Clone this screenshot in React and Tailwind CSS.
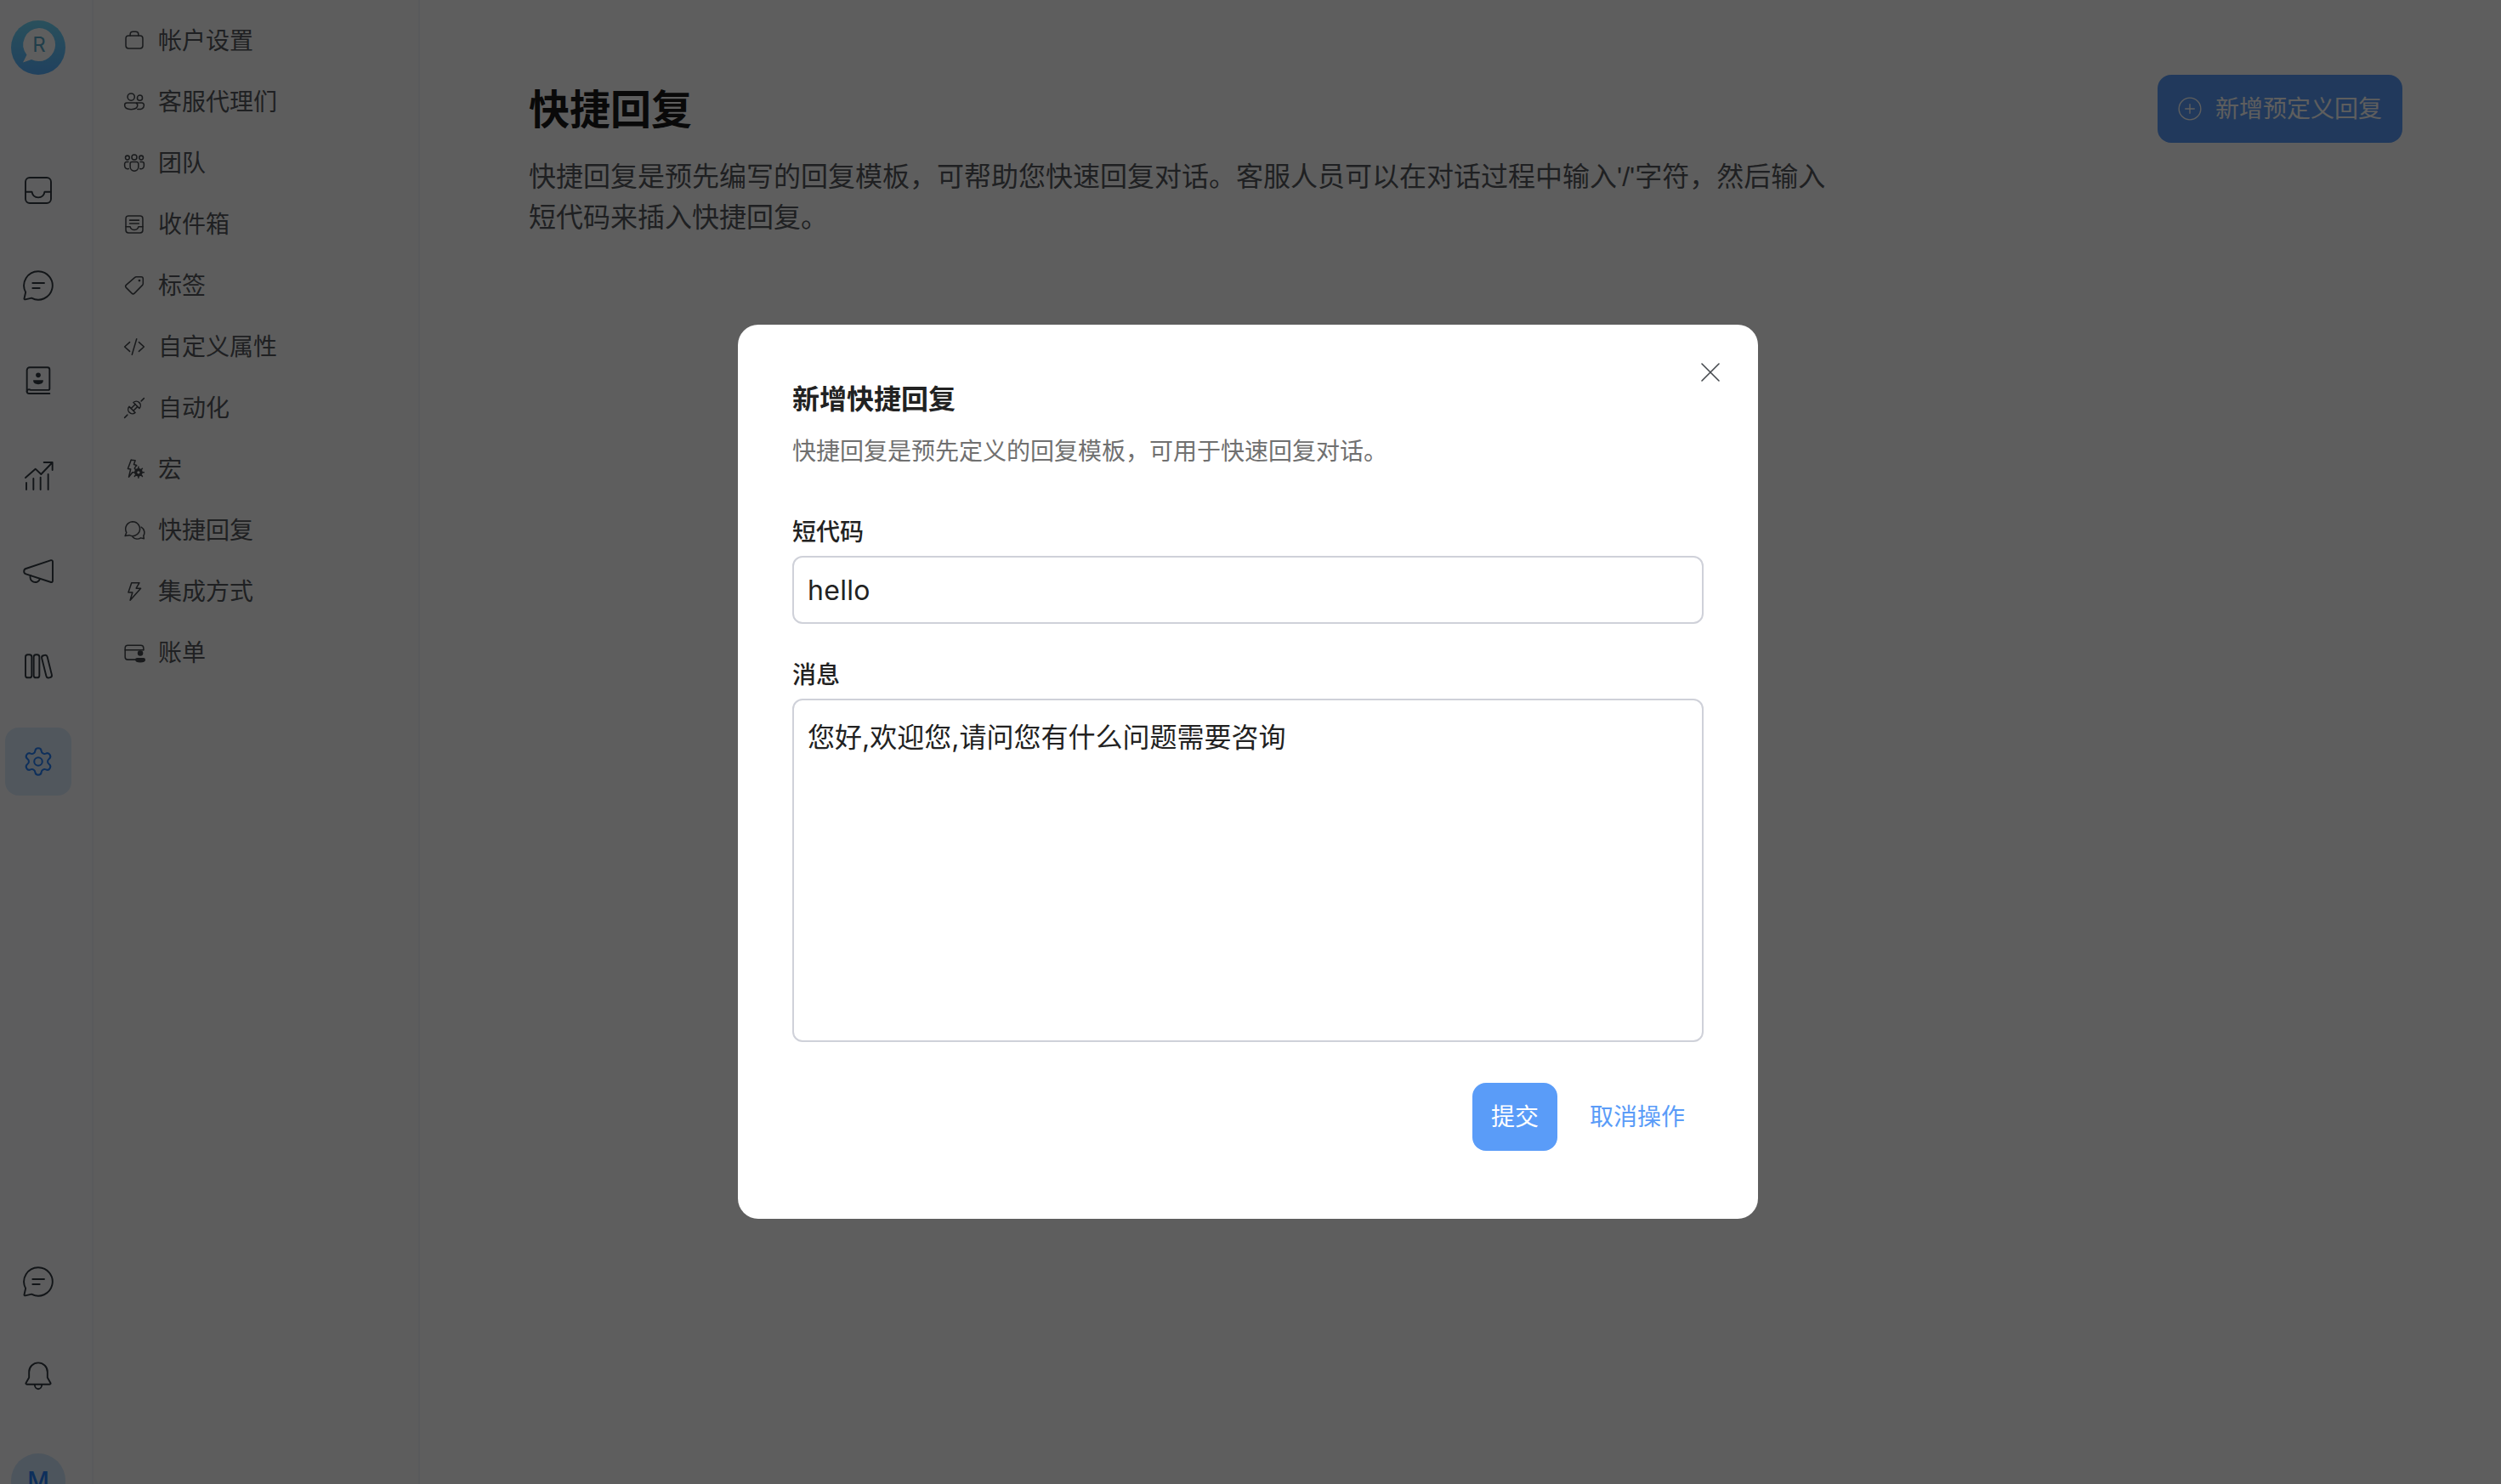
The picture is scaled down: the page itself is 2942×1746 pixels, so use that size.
import React from "react";
import { Settings } from "lucide-react";

const S = ({ size = 26, sw = 1.4, children, className = "" }) => (
  <svg width={size} height={size} viewBox="0 0 24 24" fill="none" stroke="currentColor" strokeWidth={sw} strokeLinecap="round" strokeLinejoin="round" className={className}>
    {children}
  </svg>
);

const I = {
  briefcase: <><rect x="2.8" y="6.5" width="18.4" height="13.8" rx="3" /><path d="M7.5 6.5V5a3 3 0 0 1 3-3h3a3 3 0 0 1 3 3v1.5" /></>,
  people: <><circle cx="8.5" cy="6.5" r="3.8" /><circle cx="18" cy="7.5" r="2.8" /><path d="M1.5 15.5A2.5 2.5 0 0 1 4 13h9a2.5 2.5 0 0 1 2.5 2.5c0 3-3 4.5-7 4.5s-7-1.5-7-4.5Z" /><path d="M15.5 19.8c3.8.6 7-.8 7-4A2.4 2.4 0 0 0 20.1 13H14.5" /></>,
  team: <><circle cx="12" cy="5.5" r="2.8" /><circle cx="4.5" cy="6" r="2.2" /><circle cx="19.5" cy="6" r="2.2" /><path d="M7.5 12.5a1.8 1.8 0 0 1 1.8-1.8h5.4a1.8 1.8 0 0 1 1.8 1.8V16a4.5 4.5 0 0 1-9 0Z" /><path d="M5.5 10.7H3.5a2 2 0 0 0-2 2V15a3.3 3.3 0 0 0 4.3 3" /><path d="M18.5 10.7h2a2 2 0 0 1 2 2V15a3.3 3.3 0 0 1-4.3 3" /></>,
  mailbox: <><rect x="2.8" y="2.8" width="18.4" height="18.4" rx="3" /><path d="M7 7.5h10M7 11h10" /><path d="M2.8 14.5h4.7c.5 2.4 2 3.5 4.500 3.500s4-1.100 4.500-3.500h4.700" /></>,
  tag: <><path d="M14 2.500h5.500a2 2 0 0 1 2 2V10a2 2 0 0 1-.6 1.400l-8.800 9a2 2 0 0 1-2.800 0l-6.200-6.200a2 2 0 0 1 0-2.800l9.500-8.300A2 2 0 0 1 14 2.500Z" /><circle cx="17.500" cy="6.500" r=".6" fill="currentColor" /></>,
  code: <><path d="M7 7l-5.500 5L7 17M17 7l5.500 5L17 17M14.500 3.500l-5 17" /></>,
  plug: <><path d="M1.500 22.500l3-3M19.500 4.500l3-3" /><path d="M6.500 10.500L13 17a4.600 4.600 0 0 1-6.500-6.500Z" /><path d="M17.500 12.500L11 6a4.600 4.600 0 0 1 6.500 6.500Z" /><path d="M8.500 12.500L13 8M11 15l4.500-4.500" /></>,
  macro: <><path d="M8.500 2l4.500.6-1.500 4.400 3 .8-2 2.700" /><path d="M8.500 2L5 11.500l3 .5-2 8.500 4-5" /><circle cx="16.500" cy="15.500" r="4.500" fill="currentColor" stroke="none" /><path d="M16.500 9.500v2M16.500 19.500v2M10.500 15.500h2M20.500 15.500h2M12.300 11.300l1.400 1.400M19.300 18.300l1.400 1.400M20.700 11.300l-1.400 1.400M13.700 18.300l-1.400 1.400" /><circle cx="16.500" cy="15.500" r="1.500" fill="#fff" stroke="none" /></>,
  chats: <><path d="M10 2.500a8 8 0 0 1 7.200 11.500 8 8 0 0 1-10.700 3.200L2 18l1.500-3.700A8 8 0 0 1 10 2.500Z" /><path d="M19.500 8.500a7 7 0 0 1 2.500 9.500l.5 3-3.500-.8a7 7 0 0 1-8.800-1" /></>,
  flash: <><path d="M9 2.500h8.500l-3.500 6h5L7.500 21.500 10 13H5.500Z" /></>,
  billing: <><path d="M14 19.500H5a3 3 0 0 1-3-3V7a3 3 0 0 1 3-3h14a3 3 0 0 1 3 3v2" /><path d="M2 9h20" /><circle cx="18.500" cy="12.500" r="3" fill="currentColor" stroke="none" /><path d="M13 19.500a2 2 0 0 1 2-2h7a2 2 0 0 1 2 2c0 2-2 3-5.500 3s-5.500-1-5.500-3Z" fill="currentColor" stroke="none" /></>,
};

const menu = [
  ["帐户设置", "briefcase"],
  ["客服代理们", "people"],
  ["团队", "team"],
  ["收件箱", "mailbox"],
  ["标签", "tag"],
  ["自定义属性", "code"],
  ["自动化", "plug"],
  ["宏", "macro"],
  ["快捷回复", "chats"],
  ["集成方式", "flash"],
  ["账单", "billing"],
];

const Rail = ({ children, active }) => (
  <div className={`flex h-20 w-[78px] items-center justify-center rounded-2xl ${active ? "bg-[#dcecfd] text-[#2781f6]" : "text-[#333a42]"}`}>
    {children}
  </div>
);

const ChatIcon = () => (
  <S size={40} sw={1.15}>
    <path d="M12 2a10 10 0 1 1-4.700 18.800L2.800 21.800a.6.6 0 0 1-.7-.7l1-4.400A10 10 0 0 1 12 2Z" />
    <path d="M8 10.200h8.200M8 13.800h5" />
  </S>
);

export default function App() {
  return (
    <div className="relative flex h-[1746px] w-[2942px] overflow-hidden bg-white font-['Inter','Noto_Sans_CJK_SC',sans-serif] text-[#222222]">
      {/* primary rail */}
      <aside className="flex h-full w-[110px] shrink-0 flex-col items-center overflow-hidden border-r-2 border-[#f0f4f8] bg-[#fbfdff] pr-[18px] pt-6">
        <svg width="64" height="64" viewBox="0 0 64 64" className="shrink-0">
          <defs>
            <linearGradient id="logoRing" x1="0" y1="0" x2="0" y2="1">
              <stop offset="0" stopColor="#70d8f8" />
              <stop offset="1" stopColor="#58b0ff" />
            </linearGradient>
          </defs>
          <circle cx="32" cy="32" r="32" fill="url(#logoRing)" />
          <path d="M33 9a19.500 19.500 0 1 1-9 37l-10 3.500 4.500-9A19.500 19.500 0 0 1 33 9Z" fill="#fff" />
          <text x="33" y="37" textAnchor="middle" fontSize="24" fill="#5aa8c8" fontFamily="Inter">R</text>
        </svg>
        <div className="mt-[96px] flex flex-col items-center gap-8">
          <Rail>
            <S size={40} sw={1.15}>
              <rect x="3" y="3" width="18" height="18" rx="3" />
              <path d="M3 13h4.500c.5 3 2 4 4.500 4s4-1 4.500-4H21" />
            </S>
          </Rail>
          <Rail><ChatIcon /></Rail>
          <Rail>
            <S size={40} sw={1.15}>
              <path d="M6 2.500h12.500A1.500 1.500 0 0 1 20 4v13.500a1 1 0 0 1-1 1H6.500A1.500 1.500 0 0 0 4 19.500V4.500a2 2 0 0 1 2-2Z" />
              <path d="M4 19.500A1.500 1.500 0 0 0 5.500 21H20" />
              <circle cx="12" cy="8" r="1.700" fill="currentColor" stroke="none" />
              <path d="M8.500 11.500h7v.5c0 1.500-1.500 2.500-3.500 2.500s-3.500-1-3.500-2.500Z" fill="currentColor" stroke="none" />
            </S>
          </Rail>
          <Rail>
            <S size={40} sw={1.15}>
              <path d="M3.600 21.600v-4.800M8.600 21.600v-7.800M13.600 21.600V13M19 21.600V10.800" />
              <path d="M3 13.200L10 7l4 3.800 8-8.400M16 2.400h6v5.400" />
            </S>
          </Rail>
          <Rail>
            <S size={40} sw={1.15}>
              <path d="M21 4.300a1 1 0 0 1 1.200 1v13.500a1 1 0 0 1-1.200 1L3.300 14a2 2 0 0 1 0-3.800Z" />
              <path d="M6.500 15a3.500 3.500 0 0 0 6.700 2.500" />
            </S>
          </Rail>
          <Rail>
            <S size={40} sw={1.15}>
              <rect x="3" y="3.800" width="4.400" height="16.200" rx="1.600" />
              <rect x="8.800" y="3.800" width="4" height="16.200" rx="1.600" />
              <rect x="16" y="4" width="4" height="16.200" rx="1.600" transform="rotate(-14 18 12)" />
            </S>
          </Rail>
          <Rail active>
            <Settings size={38} strokeWidth={1.3} />
          </Rail>
        </div>
        <div className="mt-auto flex flex-col items-center">
          <Rail><ChatIcon /></Rail>
          <div className="mt-8">
            <Rail>
              <S size={40} sw={1.15}>
                <path d="M12 2a6.500 6.500 0 0 0-6.500 6.500v4l-2.200 3.800a.6.6 0 0 0 .5.9h16.400a.6.6 0 0 0 .5-.9l-2.200-3.800v-4A6.500 6.500 0 0 0 12 2Z" />
                <path d="M9.500 17.500a2.500 3 0 0 0 5 0" />
              </S>
            </Rail>
          </div>
          <div className="mb-[-28px] mt-[50px] flex h-16 w-16 items-center justify-center rounded-full bg-[#d1e6fb] text-[28px] font-medium text-[#2781f6]">
            M
          </div>
        </div>
      </aside>

      {/* secondary sidebar */}
      <nav className="flex h-full w-[384px] shrink-0 flex-col border-r-2 border-[#f0f4f8] bg-[#fcfdfd] pl-[35px] pt-3 text-[#55585c]">
        {menu.map(([label, icon]) => (
          <div key={label} className="flex h-[72px] shrink-0 items-center gap-[15px]">
            <S className="shrink-0 text-[#44484d]">{I[icon]}</S>
            <span className="text-[28px] leading-10">{label}</span>
          </div>
        ))}
      </nav>

      {/* main */}
      <main className="flex min-w-0 flex-1 items-start justify-between pl-[128px] pr-[116px] pt-[88px]">
        <div className="w-[1540px]">
          <h1 className="mt-[5px] text-[48px] font-bold leading-[72px] text-[#1a1a1a]">快捷回复</h1>
          <p className="mt-[19px] w-[1540px] text-[32px] leading-[48px] text-[#55585c]">
            快捷回复是预先编写的回复模板，可帮助您快速回复对话。客服人员可以在对话过程中输入<span className="font-['Liberation_Sans']">'/'</span>字符，然后输入短代码来插入快捷回复。
          </p>
        </div>
        <button className="flex h-20 w-[288px] items-center gap-4 rounded-2xl bg-[#5a9cf8] pl-6 text-[28px] text-white">
          <S size={28} sw={1.2}>
            <circle cx="12" cy="12" r="11" />
            <path d="M12 7.500v9M7.500 12h9" />
          </S>
          新增预定义回复
        </button>
      </main>

      {/* overlay */}
      <div className="absolute inset-0 flex items-start justify-center bg-[rgba(0,0,0,0.63)] pr-[6px] pt-[382px]">
        <div className="relative h-[1052px] w-[1200px] rounded-3xl bg-white px-16 pt-16 text-[#222222]">
          <svg width="22" height="22" viewBox="0 0 22 22" fill="none" stroke="#44484d" strokeWidth="1.6" strokeLinecap="round" className="absolute right-[45px] top-[45px]">
            <path d="M1 1l20 20M21 1L1 21" />
          </svg>
          <h2 className="text-[32px] font-semibold leading-[48px] text-[#222222]">新增快捷回复</h2>
          <p className="mt-[15px] text-[28px] leading-[44px] text-[#707070]">快捷回复是预先定义的回复模板，可用于快速回复对话。</p>

          <label className="mt-[53px] block text-[28px] font-medium leading-[40px] text-[#222222]">短代码</label>
          <input readOnly value="hello" className="mt-2 block h-20 w-[1072px] rounded-xl border-2 border-[#cfd1d9] bg-white px-4 text-[32px] tracking-[0.3px] text-[#222222] outline-none" />

          <label className="mt-10 block text-[28px] font-medium leading-[40px] text-[#222222]">消息</label>
          <textarea readOnly value="您好,欢迎您,请问您有什么问题需要咨询" className="mt-2 block h-[404px] w-[1072px] resize-none rounded-xl border-2 border-[#cfd1d9] bg-white px-4 pt-[22px] text-[32px] leading-[44px] text-[#222222] outline-none" />

          <div className="mt-12 flex items-center justify-end gap-[38px] pr-[22px]">
            <button className="h-20 w-[100px] rounded-2xl bg-[#5a9cf8] text-[28px] text-white">提交</button>
            <button className="text-[28px] text-[#5a9cf8]">取消操作</button>
          </div>
        </div>
      </div>
    </div>
  );
}
